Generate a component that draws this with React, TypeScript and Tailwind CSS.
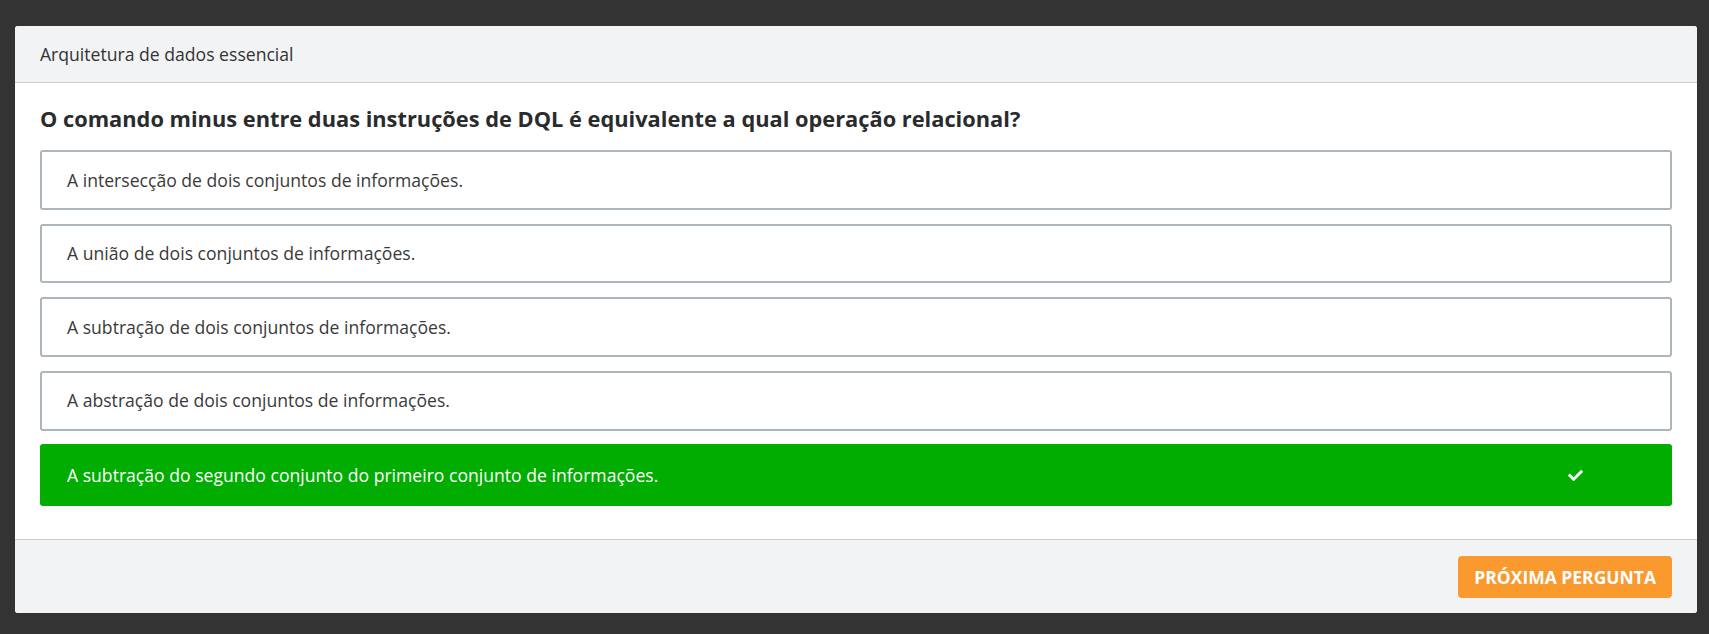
import { FaCheck } from "react-icons/fa";

const options = [
  { text: "A intersecção de dois conjuntos de informações.", correct: false },
  { text: "A união de dois conjuntos de informações.", correct: false },
  { text: "A subtração de dois conjuntos de informações.", correct: false },
  { text: "A abstração de dois conjuntos de informações.", correct: false },
  { text: "A subtração do segundo conjunto do primeiro conjunto de informações.", correct: true },
];

export default function App() {
  return (
    <div className="h-[634px] overflow-hidden bg-[#333333] pt-[26px] pl-[15px] pr-[12px] font-['Open_Sans',sans-serif]">
      <div className="overflow-hidden rounded-[3px] bg-white">
        <div className="flex h-[57px] items-center border-b border-[#c9cdd2] bg-[#f2f3f5] px-[25px] text-[17.6px] text-[#333333]">
          Arquitetura de dados essencial
        </div>

        <div className="px-[25px] pt-[21px] pb-[33px]">
          <h2 className="mb-[16px] text-[21.8px] leading-[30px] font-bold text-[#292b2c]">
            O comando minus entre duas instruções de DQL é equivalente a qual operação relacional?
          </h2>

          <div className="flex flex-col gap-[13.8px]">
            {options.map((opt) =>
              opt.correct ? (
                <div
                  key={opt.text}
                  className="flex h-[62px] items-center rounded-[3px] bg-[#00ad00] pl-[27px] pr-[89px] text-[17.6px] font-medium text-white"
                >
                  <span className="flex-1">{opt.text}</span>
                  <FaCheck className="h-[15px] w-[15px]" />
                </div>
              ) : (
                <div
                  key={opt.text}
                  className="flex h-[59.8px] items-center rounded-[3px] border-2 border-[#adb5bd] bg-white pl-[25px] text-[17.6px] text-[#3a3a3a]"
                >
                  {opt.text}
                </div>
              ),
            )}
          </div>
        </div>

        <div className="flex h-[74px] items-center justify-end border-t border-[#c9cdd2] bg-[#f2f3f5] px-[25px]">
          <button
            type="button"
            className="h-[42px] rounded-[4px] bg-[#fa9a2e] px-[16px] text-[17.5px] font-bold uppercase text-white"
          >
            Próxima pergunta
          </button>
        </div>
      </div>
    </div>
  );
}
